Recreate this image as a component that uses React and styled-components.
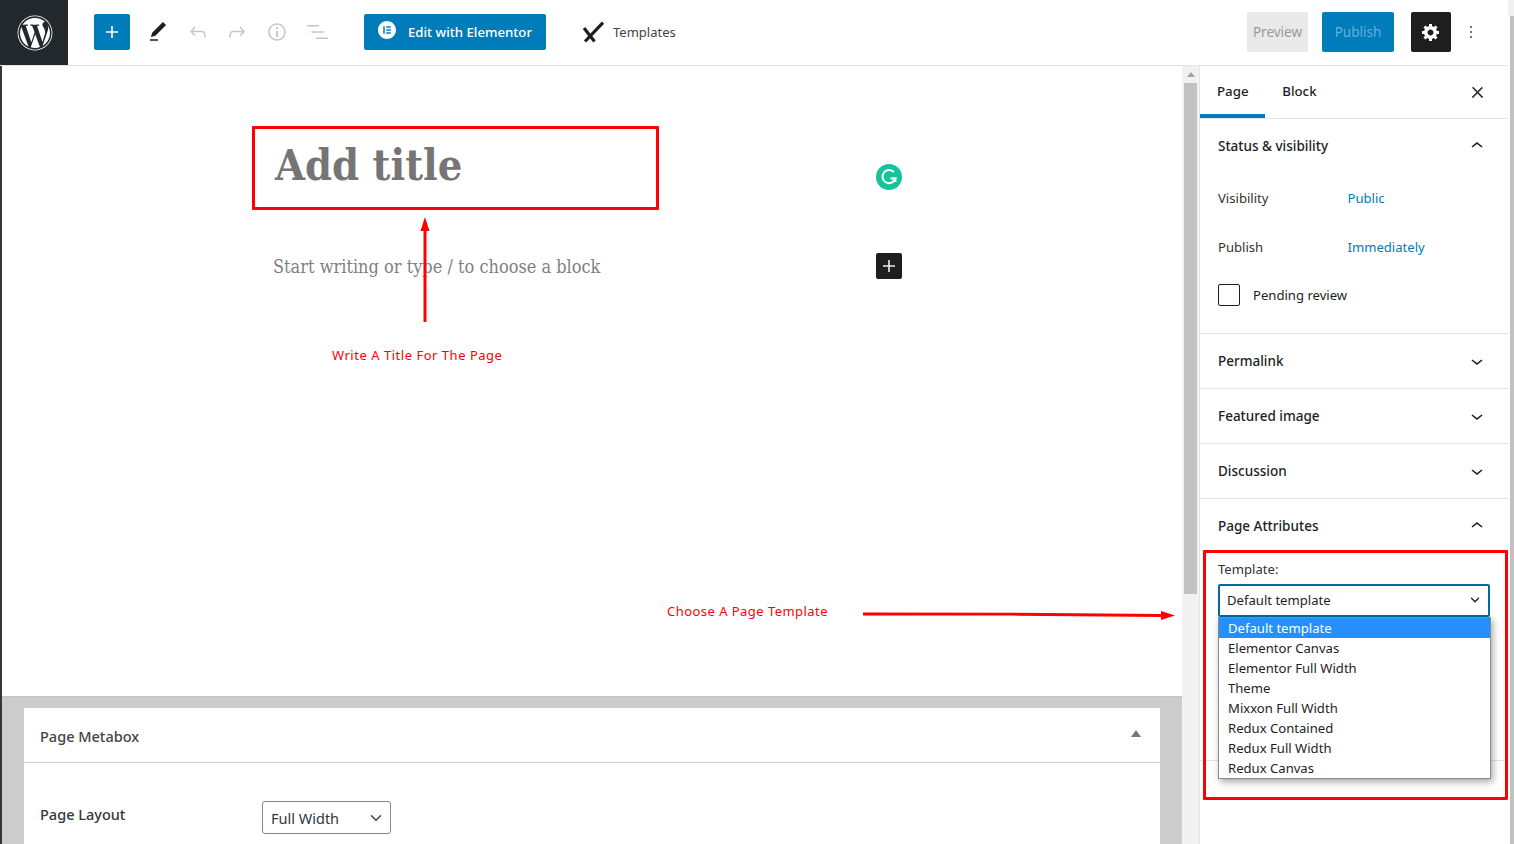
import React from "react";
import styled, { createGlobalStyle } from "styled-components";
import { ChevronDown } from "lucide-react";
import { FaWordpress } from "react-icons/fa";
import { SiElementor } from "react-icons/si";

const GlobalStyle = createGlobalStyle`
  html, body {
    margin: 0;
    height: 100%;
    overflow: hidden;
    background: #fff;
  }
  * {
    box-sizing: border-box;
  }
  #root {
    height: 100%;
  }
`;

const uiFont = `"Noto Sans", "Open Sans", sans-serif`;
const serifFont = `"DejaVu Serif Condensed", "DejaVu Serif", serif`;

const Page = styled.div`
  display: flex;
  height: 844px;
  width: 1514px;
  overflow: hidden;
  position: relative;
  font-family: ${uiFont};
  color: #1e1e1e;
`;

const Workspace = styled.div`
  width: 1508px;
  display: flex;
  flex-direction: column;
`;

const PageScrollbar = styled.div`
  width: 6px;
  display: flex;
  flex-direction: column;
`;

const PageScrollCap = styled.div`
  height: 16px;
  background: #f1f1f1;
`;

const PageScrollThumb = styled.div`
  flex: 1;
  margin-left: 2px;
  background: #c1c1c1;
`;

const TopBar = styled.header`
  height: 66px;
  flex: none;
  display: flex;
  align-items: center;
  border-bottom: 1px solid #e2e4e7;
  padding-right: 27px;
  padding-bottom: 1px;
`;

const LogoTile = styled.div`
  width: 68px;
  height: 65px;
  margin-bottom: -1px;
  padding-left: 2px;
  background: #23282d;
  color: #fff;
  display: flex;
  align-items: center;
  justify-content: center;
  font-size: 36px;
`;

const InserterButton = styled.div`
  width: 36px;
  height: 36px;
  margin-left: 26px;
  margin-right: 8px;
  border-radius: 2px;
  background: #007cba;
  color: #fff;
  display: flex;
  align-items: center;
  justify-content: center;
`;

const ToolSlot = styled.div`
  width: 39.75px;
  display: flex;
  justify-content: center;
  color: ${(p) => (p.$muted ? "#c5c7c9" : "#1e1e1e")};
`;

const ElementorButton = styled.div`
  width: 182px;
  height: 36px;
  margin-left: 27.25px;
  border-radius: 2px;
  background: #007cba;
  color: #fff;
  display: flex;
  align-items: center;
  padding-left: 14px;
  gap: 12px;
  font-size: 13.2px;
  font-weight: 500;
  svg {
    margin-top: -4px;
  }
`;

const TemplatesLink = styled.div`
  display: flex;
  align-items: center;
  margin-left: 35px;
  gap: 8px;
  font-size: 13px;
  color: #444;
`;

const TopActions = styled.div`
  margin-left: auto;
  display: flex;
  align-items: center;
`;

const ActionButton = styled.div`
  height: 40px;
  width: ${(p) => p.$width}px;
  margin-right: ${(p) => p.$gap}px;
  border-radius: 2px;
  background: ${(p) => p.$bg};
  color: ${(p) => p.$fg};
  display: flex;
  align-items: center;
  justify-content: center;
  font-size: 13.5px;
`;

const KebabSlot = styled.div`
  width: 20px;
  display: flex;
  justify-content: center;
`;

const Main = styled.div`
  flex: 1;
  min-height: 0;
  display: flex;
`;

const EditorColumn = styled.main`
  width: 1182px;
  flex: none;
  display: flex;
  flex-direction: column;
  border-left: 2px solid #32373c;
`;

const Canvas = styled.section`
  height: 630px;
  flex: none;
  position: relative;
  padding: 60px 0 0 250px;
`;

const TitleBox = styled.div`
  width: 407px;
  height: 84px;
  border: 3px solid #f00;
  border-radius: 1px;
  padding: 7px 0 0 20px;
  font-family: ${serifFont};
  font-weight: 700;
  font-size: 43px;
  line-height: 58px;
  color: #757575;
`;

const ParagraphRow = styled.div`
  width: 629px;
  margin: 43px 0 0 21px;
  display: flex;
  align-items: center;
  justify-content: space-between;
  font-family: ${serifFont};
  font-size: 18px;
  line-height: 28px;
  color: #808080;
  font-weight: 400;
`;

const SideInserter = styled.div`
  width: 26px;
  height: 26px;
  margin-top: -2px;
  border-radius: 2px;
  background: #1e1e1e;
  color: #eee;
  display: flex;
  align-items: center;
  justify-content: center;
`;

const GrammarlyBadge = styled.div`
  position: absolute;
  left: 874px;
  top: 98px;
  width: 26px;
  height: 26px;
  border-radius: 50%;
  background: #15c39a;
  display: flex;
  align-items: center;
  justify-content: center;
`;

const Note = styled.div`
  position: absolute;
  left: ${(p) => p.$x}px;
  top: ${(p) => p.$y}px;
  color: #f00;
  font-size: 13px;
  line-height: 18px;
  letter-spacing: ${(p) => p.$spacing}px;
  white-space: nowrap;
`;

const ArrowOverlay = styled.svg`
  position: absolute;
  left: ${(p) => p.$x}px;
  top: ${(p) => p.$y}px;
  overflow: visible;
  z-index: 5;
`;

const MetaArea = styled.section`
  flex: 1;
  background: #ccc;
  border-top: 1px solid #c4c4c4;
  padding: 11px 22px 0;
  overflow: hidden;
`;

const MetaCard = styled.div`
  background: #fff;
  height: 200px;
`;

const MetaHeader = styled.div`
  height: 55px;
  border-bottom: 1px solid #ccd0d4;
  display: flex;
  align-items: center;
  justify-content: space-between;
  padding: 2px 19px 0 16px;
  font-size: 14.5px;
  font-weight: 500;
  color: #444;
`;

const Caret = styled.span`
  width: 0;
  height: 0;
  margin-bottom: 6px;
  border-left: 5px solid transparent;
  border-right: 5px solid transparent;
  border-bottom: 7px solid #72777c;
`;

const MetaRow = styled.div`
  display: flex;
  align-items: flex-start;
  padding: 38px 0 0 16px;
`;

const MetaLabel = styled.div`
  width: 222px;
  margin-top: 3px;
  font-size: 14.5px;
  font-weight: 500;
  color: #32373c;
`;

const MetaSelect = styled.div`
  width: 129px;
  height: 33px;
  border: 1px solid #7e8993;
  border-radius: 3px;
  display: flex;
  align-items: center;
  justify-content: space-between;
  padding: 1px 5px 0 8px;
  font-size: 14.5px;
  color: #32373c;
`;

const EditorScrollbar = styled.div`
  width: 18px;
  flex: none;
  background: #f1f1f1;
  border-right: 1px solid #e2e4e7;
  display: flex;
  flex-direction: column;
  align-items: center;
`;

const ScrollArrow = styled.span`
  margin-top: 6px;
  width: 0;
  height: 0;
  border-left: 4px solid transparent;
  border-right: 4px solid transparent;
  border-bottom: 5px solid #a3a3a3;
`;

const ScrollThumb = styled.div`
  margin-top: 6px;
  width: 13px;
  height: 511px;
  background: #c1c1c1;
`;

const Sidebar = styled.aside`
  flex: 1;
  position: relative;
  font-size: 13.1px;
`;

const TabBar = styled.div`
  height: 53px;
  display: flex;
  border-bottom: 1px solid #e2e4e7;
  padding-right: 19px;
`;

const Tab = styled.div`
  height: 52px;
  padding: 2px 16.6px 0 17px;
  display: flex;
  align-items: center;
  font-size: 13.3px;
  font-weight: 500;
  border-bottom: 4px solid ${(p) => (p.$active ? "#007cba" : "transparent")};
`;

const CloseSlot = styled.div`
  margin-left: auto;
  margin-right: 3px;
  height: 52px;
  display: flex;
  align-items: center;
  svg {
    stroke: currentColor;
    stroke-width: 0.9;
  }
`;

const Panel = styled.div`
  border-bottom: 1px solid #e2e4e7;
`;

const PanelHeader = styled.div`
  height: 54px;
  display: flex;
  align-items: center;
  justify-content: space-between;
  padding: ${(p) => (p.$raised ? "0" : "1px")} 19px 0 18px;
  font-size: 13.5px;
  font-weight: 500;
`;

const StatusBody = styled.div`
  padding: 1px 18px 13px;
`;

const StatusRow = styled.div`
  height: 48.5px;
  display: flex;
  align-items: center;
`;

const RowLabel = styled.div`
  width: 129.5px;
  color: #333;
`;

const RowValue = styled.div`
  color: #007cba;
`;

const CheckBox = styled.span`
  width: 22px;
  height: 22px;
  border: 1px solid #1e1e1e;
  border-radius: 2px;
  margin-right: 13px;
`;

const AttributesBody = styled.div`
  height: 207px;
  padding: 7px 18px 0;
`;

const FieldLabel = styled.div`
  line-height: 18px;
  color: #333;
`;

const TemplateField = styled.div`
  position: relative;
  margin-top: 6px;
  width: 272px;
`;

const TemplateSelect = styled.div`
  height: 33px;
  border: 2px solid #006ba1;
  border-radius: 2px;
  display: flex;
  align-items: center;
  justify-content: space-between;
  padding: 0 6px 0 7px;
`;

const OptionList = styled.div`
  position: absolute;
  left: 0;
  top: 33px;
  width: 273px;
  background: #fff;
  border: 1px solid #8a8a8a;
  box-shadow: 2px 3px 7px rgba(0, 0, 0, 0.35);
  z-index: 3;
`;

const Option = styled.div`
  height: 20px;
  line-height: 20px;
  padding-left: 9px;
  white-space: nowrap;
  background: ${(p) => (p.$selected ? "#2490ff" : "transparent")};
  color: ${(p) => (p.$selected ? "#fff" : "#1e1e1e")};
`;

const HighlightBox = styled.div`
  position: absolute;
  left: 3px;
  top: 484px;
  width: 305px;
  height: 250px;
  border: 3px solid #f00;
  border-radius: 1px;
  pointer-events: none;
  z-index: 4;
`;

const Icon = ({ d, size = 24, viewBox = "0 0 24 24" }) => (
  <svg width={size} height={size} viewBox={viewBox} fill="currentColor">
    <path d={d} />
  </svg>
);

const icons = {
  plus: "M18 11.2h-5.2V6h-1.6v5.2H6v1.6h5.2V18h1.6v-5.2H18z",
  pencil: "M20.1 5.1L16.9 2 6.2 12.7l-1.3 4.4 4.5-1.3L20.1 5.1zM4 20.8h8v-1.5H4v1.5z",
  undo: "M18.3 11.7c-.6-.6-1.4-.9-2.3-.9H6.7l2.9-3.3-1.1-1-4.5 5L8.5 16l1-1-2.7-2.7H16c.5 0 .9.2 1.3.5 1 1 1 3.4 1 4.5v.3h1.5v-.2c0-1.5 0-4.3-1.5-5.7z",
  redo: "M15.6 6.5l-1.1 1 2.9 3.3H8c-.9 0-1.7.3-2.3.9-1.4 1.5-1.4 4.2-1.4 5.6v.2h1.5v-.3c0-1.1 0-3.5 1-4.5.3-.3.7-.5 1.3-.5h9.2L14.5 15l1.1 1.1 4.6-4.6-4.6-5z",
  info: "M12 3.2c-4.8 0-8.8 3.9-8.8 8.8 0 4.8 3.9 8.8 8.8 8.8 4.8 0 8.8-3.9 8.8-8.8 0-4.8-4-8.8-8.8-8.8zm0 16c-4 0-7.2-3.3-7.2-7.2C4.8 8 8 4.8 12 4.8s7.2 3.3 7.2 7.2c0 4-3.2 7.2-7.2 7.2zM11 17h2v-6h-2v6zm0-8h2V7h-2v2z",
  list: "M2 5h12v1.5H2zM6.5 11.2H19v1.5H6.5zM11 17.5h12V19H11z",
  close: "M13 11.8l6.1-6.3-1-1-6.1 6.2-6.1-6.3-1 1 6.1 6.3-6.5 6.7 1 1 6.5-6.6 6.5 6.6 1-1z",
  up: "M6.5 12.4L12 8l5.5 4.4-.9 1.2L12 10l-4.5 3.6-1-1.2z",
  down: "M17.5 11.6L12 16l-5.5-4.4.9-1.2L12 14l4.5-3.6 1 1.2z",
  more: "M13 19h-2v-2h2v2zm0-6h-2v-2h2v2zm0-6h-2V5h2v2z",
  gear: "M18 12h-2.18c-.17.7-.44 1.35-.81 1.93l1.54 1.54-2.1 2.1-1.54-1.54c-.58.36-1.23.63-1.91.79V19H8v-2.18c-.68-.16-1.33-.43-1.91-.79l-1.54 1.54-2.12-2.12 1.54-1.54c-.36-.58-.63-1.23-.79-1.91H1V9.03h2.17c.16-.7.44-1.35.8-1.94L2.43 5.55l2.1-2.1 1.54 1.54c.58-.37 1.24-.64 1.93-.81V2h3v2.18c.68.16 1.33.43 1.91.79l1.54-1.54 2.12 2.12-1.54 1.54c.36.59.64 1.24.8 1.94H18V12zm-8.5 1.5c1.66 0 3-1.34 3-3s-1.34-3-3-3-3 1.34-3 3 1.34 3 3 3z",
};

const TemplatesMark = () => (
  <svg width="24" height="24" viewBox="0 0 24 24" fill="none" stroke="#1e1e1e">
    <path d="M22 2.7L4 21.5" strokeWidth="3.2" />
    <path d="M3 8L13.5 21.5" strokeWidth="3.2" />
  </svg>
);

const GrammarlyMark = () => (
  <svg width="20" height="20" viewBox="0 0 20 20" fill="none" stroke="#fff" strokeWidth="2">
    <path d="M15 5.2A6.6 6.6 0 1 0 16.4 11.5H11.5" />
    <path d="M16.6 15v-3.6h-3.4" strokeWidth="1.6" />
  </svg>
);

const collapsedPanels = ["Permalink", "Featured image", "Discussion"];

const templates = [
  "Default template",
  "Elementor Canvas",
  "Elementor Full Width",
  "Theme",
  "Mixxon Full Width",
  "Redux Contained",
  "Redux Full Width",
  "Redux Canvas",
];

const App = () => {
  return (
    <>
      <GlobalStyle />
      <Page>
        <Workspace>
          <TopBar>
            <LogoTile>
              <FaWordpress />
            </LogoTile>
            <InserterButton>
              <Icon d={icons.plus} />
            </InserterButton>
            <ToolSlot><Icon d={icons.pencil} /></ToolSlot>
            <ToolSlot $muted><Icon d={icons.undo} /></ToolSlot>
            <ToolSlot $muted><Icon d={icons.redo} /></ToolSlot>
            <ToolSlot $muted><Icon d={icons.info} /></ToolSlot>
            <ToolSlot $muted><Icon d={icons.list} /></ToolSlot>
            <ElementorButton>
              <SiElementor size={18} />
              Edit with Elementor
            </ElementorButton>
            <TemplatesLink>
              <TemplatesMark />
              Templates
            </TemplatesLink>
            <TopActions>
              <ActionButton $width={61} $gap={14} $bg="#e9e9e9" $fg="#9a9a9a">Preview</ActionButton>
              <ActionButton $width={72} $gap={17} $bg="#007cba" $fg="#66b0d6">Publish</ActionButton>
              <ActionButton $width={40} $gap={10} $bg="#1e1e1e" $fg="#fff">
                <Icon d={icons.gear} size={20} viewBox="0 0 20 20" />
              </ActionButton>
              <KebabSlot><Icon d={icons.more} size={28} /></KebabSlot>
            </TopActions>
          </TopBar>

          <Main>
            <EditorColumn>
              <Canvas>
                <TitleBox>Add title</TitleBox>
                <ParagraphRow>
                  Start writing or type / to choose a block
                  <SideInserter>
                    <Icon d={icons.plus} />
                  </SideInserter>
                </ParagraphRow>
                <GrammarlyBadge>
                  <GrammarlyMark />
                </GrammarlyBadge>
                <ArrowOverlay $x={417} $y={151} width="12" height="106" viewBox="0 0 12 106">
                  <path d="M6 12V105" stroke="#f00" strokeWidth="3" />
                  <path d="M6 0L10.5 14H1.5z" fill="#f00" />
                </ArrowOverlay>
                <Note $x={330} $y={280} $spacing={0.52}>Write A Title For The Page</Note>
                <Note $x={665} $y={536} $spacing={0.46}>Choose A Page Template</Note>
                <ArrowOverlay $x={861} $y={543} width="312" height="12" viewBox="0 0 312 12">
                  <path d="M0 5L150 5.2L300 6.5" stroke="#f00" strokeWidth="2.8" fill="none" />
                  <path d="M312 6.5L298 2V11z" fill="#f00" />
                </ArrowOverlay>
              </Canvas>
              <MetaArea>
                <MetaCard>
                  <MetaHeader>
                    Page Metabox
                    <Caret />
                  </MetaHeader>
                  <MetaRow>
                    <MetaLabel>Page Layout</MetaLabel>
                    <MetaSelect>
                      Full Width
                      <ChevronDown size={18} strokeWidth={2} color="#444" />
                    </MetaSelect>
                  </MetaRow>
                </MetaCard>
              </MetaArea>
            </EditorColumn>
            <EditorScrollbar>
              <ScrollArrow />
              <ScrollThumb />
            </EditorScrollbar>

            <Sidebar>
              <TabBar>
                <Tab $active>Page</Tab>
                <Tab>Block</Tab>
                <CloseSlot><Icon d={icons.close} size={17} /></CloseSlot>
              </TabBar>

              <Panel>
                <PanelHeader $raised>
                  Status &amp; visibility
                  <Icon d={icons.up} />
                </PanelHeader>
                <StatusBody>
                  <StatusRow>
                    <RowLabel>Visibility</RowLabel>
                    <RowValue>Public</RowValue>
                  </StatusRow>
                  <StatusRow>
                    <RowLabel>Publish</RowLabel>
                    <RowValue>Immediately</RowValue>
                  </StatusRow>
                  <StatusRow>
                    <CheckBox />
                    Pending review
                  </StatusRow>
                </StatusBody>
              </Panel>

              {collapsedPanels.map((name) => (
                <Panel key={name}>
                  <PanelHeader>
                    {name}
                    <Icon d={icons.down} />
                  </PanelHeader>
                </Panel>
              ))}

              <Panel>
                <PanelHeader>
                  Page Attributes
                  <Icon d={icons.up} />
                </PanelHeader>
                <AttributesBody>
                  <FieldLabel>Template:</FieldLabel>
                  <TemplateField>
                    <TemplateSelect>
                      Default template
                      <ChevronDown size={14} strokeWidth={2.2} />
                    </TemplateSelect>
                    <OptionList>
                      {templates.map((name, i) => (
                        <Option key={name} $selected={i === 0}>{name}</Option>
                      ))}
                    </OptionList>
                  </TemplateField>
                </AttributesBody>
              </Panel>

              <HighlightBox />
            </Sidebar>
          </Main>
        </Workspace>
        <PageScrollbar>
          <PageScrollCap />
          <PageScrollThumb />
        </PageScrollbar>
      </Page>
    </>
  );
};

export default App;
